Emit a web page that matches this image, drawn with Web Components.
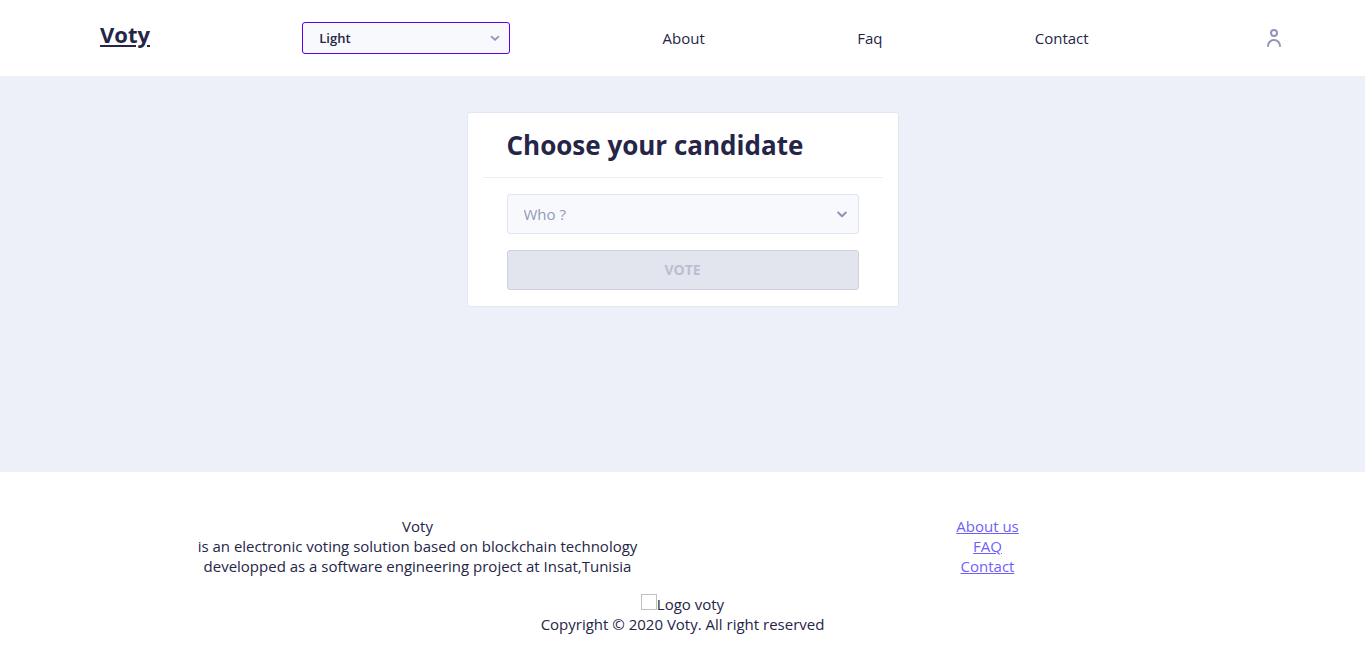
<!DOCTYPE html>
<html lang="en">
<head>
<meta charset="utf-8">
<title>Voty</title>
<style>
body { margin: 0; font: 400 15px/20px "Open Sans", sans-serif; color: #252547; background: #fff; }
</style>
</head>
<body>
<voty-app></voty-app>
<script>
const define = (name, html, setup) => customElements.define(name, class extends HTMLElement {
  constructor() {
    super();
    const template = document.createElement('template');
    template.innerHTML = html;
    this.attachShadow({ mode: 'open' }).append(template.content.cloneNode(true));
    if (setup) setup(this, this.shadowRoot);
  }
});

define('voty-select', `
<style>
:host { display: block; position: relative; }
select { appearance: none; display: block; box-sizing: border-box; width: 100%; height: var(--height, 40px); margin: 0; padding: 0 40px 0 16px; border: 1px solid var(--line, #e1e4f2); border-radius: 3px; background: #f8f9fd; color: var(--ink, #8f9bb8); font: var(--face, 400 15px/24px "Open Sans", sans-serif); outline: none; }
svg { position: absolute; right: var(--inset, 7px); top: 0; bottom: 0; margin: auto 0; width: var(--icon, 20px); height: var(--icon, 20px); fill: none; stroke: #8f94b8; stroke-width: 2.4; stroke-linecap: round; stroke-linejoin: round; pointer-events: none; }
</style>
<select></select>
<svg viewBox="0 0 24 24" aria-hidden="true"><path d="M7.4 10.2L12 14.6l4.6-4.4"/></svg>`,
(host, root) => {
  const select = root.querySelector('select');
  select.setAttribute('aria-label', host.getAttribute('label') || '');
  for (const text of (host.getAttribute('options') || '').split('|')) select.add(new Option(text));
});

define('voty-header', `
<style>
:host { display: block; background: #fff; }
nav { display: flex; align-items: center; justify-content: space-between; height: 76px; padding: 0 76px 0 100px; }
a { color: inherit; text-decoration: none; }
.brand { font-size: 22px; line-height: 32px; font-weight: 700; text-decoration: underline; padding-bottom: 8px; }
voty-select { width: 208px; --height: 32px; --line: #5a00ee; --ink: #252547; --face: 600 13px/24px "Open Sans", sans-serif; --inset: 6px; --icon: 18px; }
button { display: flex; justify-content: flex-end; width: 48px; padding: 0 3px; border: 0; background: none; }
svg { width: 24px; height: 24px; fill: #8f94b8; }
</style>
<nav>
  <a class="brand" href="#home">Voty</a>
  <voty-select label="Theme" options="Light"></voty-select>
  <a href="#about">About</a>
  <a href="#faq">Faq</a>
  <a href="#contact">Contact</a>
  <button type="button" aria-label="Account"><svg viewBox="0 0 24 24"><path d="M12 11a4 4 0 1 0-4-4 4 4 0 0 0 4 4zm0-6a2 2 0 1 1-2 2 2 2 0 0 1 2-2zM12 13a7 7 0 0 0-7 7 1 1 0 0 0 2 0 5 5 0 0 1 10 0 1 1 0 0 0 2 0 7 7 0 0 0-7-7z"/></svg></button>
</nav>`);

define('voty-card', `
<style>
:host { display: block; box-sizing: border-box; width: 100%; max-width: 432px; border: 1px solid #e4e7f3; border-radius: 3px; background: #fff; padding: 0 15px; }
header { padding: 16px 24px; border-bottom: 1px solid #edeff8; }
h1 { margin: 0; font-size: 26px; line-height: 32px; font-weight: 700; }
.body { display: grid; gap: 16px; padding: 16px 24px; }
</style>
<header><h1><slot name="title"></slot></h1></header>
<div class="body"><slot></slot></div>`);

define('voty-button', `
<style>
:host { display: block; }
button { display: block; box-sizing: border-box; width: 100%; height: 40px; border: 1px solid #ced1df; border-radius: 3px; background: #e3e5ee; color: #babed2; font: 700 14px/16px "Open Sans", sans-serif; text-transform: uppercase; }
</style>
<button type="button" disabled><slot></slot></button>`);

define('voty-footer', `
<style>
:host { display: block; background: #fff; text-align: center; padding: 44px 0 35px; }
.columns { display: grid; grid-template-columns: 1fr 1fr; max-width: 1140px; margin: 0 auto; }
ul { list-style: none; margin: 0 0 18px; padding: 0 0 0 40px; }
a { color: #6f5ffa; }
p { margin: 0; }
.logo { display: inline-block; box-sizing: border-box; width: 16px; height: 16px; border: 1px solid #c0c0c0; }
</style>
<div class="columns">
  <ul><li>Voty</li><li>is an electronic voting solution based on blockchain technology</li><li>developped as a software engineering project at Insat,Tunisia</li></ul>
  <ul><li><a href="#about">About us</a></li><li><a href="#faq">FAQ</a></li><li><a href="#contact">Contact</a></li></ul>
</div>
<p><span class="logo"></span>Logo voty</p>
<p>Copyright © 2020 Voty. All right reserved</p>`);

define('voty-app', `
<style>
:host { display: flex; flex-direction: column; min-height: 100vh; }
main { flex: 1; display: flex; justify-content: center; align-items: flex-start; padding: 36px 16px; background: #edf0f9; }
</style>
<voty-header></voty-header>
<main>
  <voty-card>
    <span slot="title">Choose your candidate</span>
    <voty-select label="Candidate" options="Who ?"></voty-select>
    <voty-button>Vote</voty-button>
  </voty-card>
</main>
<voty-footer></voty-footer>`);
</script>
</body>
</html>
